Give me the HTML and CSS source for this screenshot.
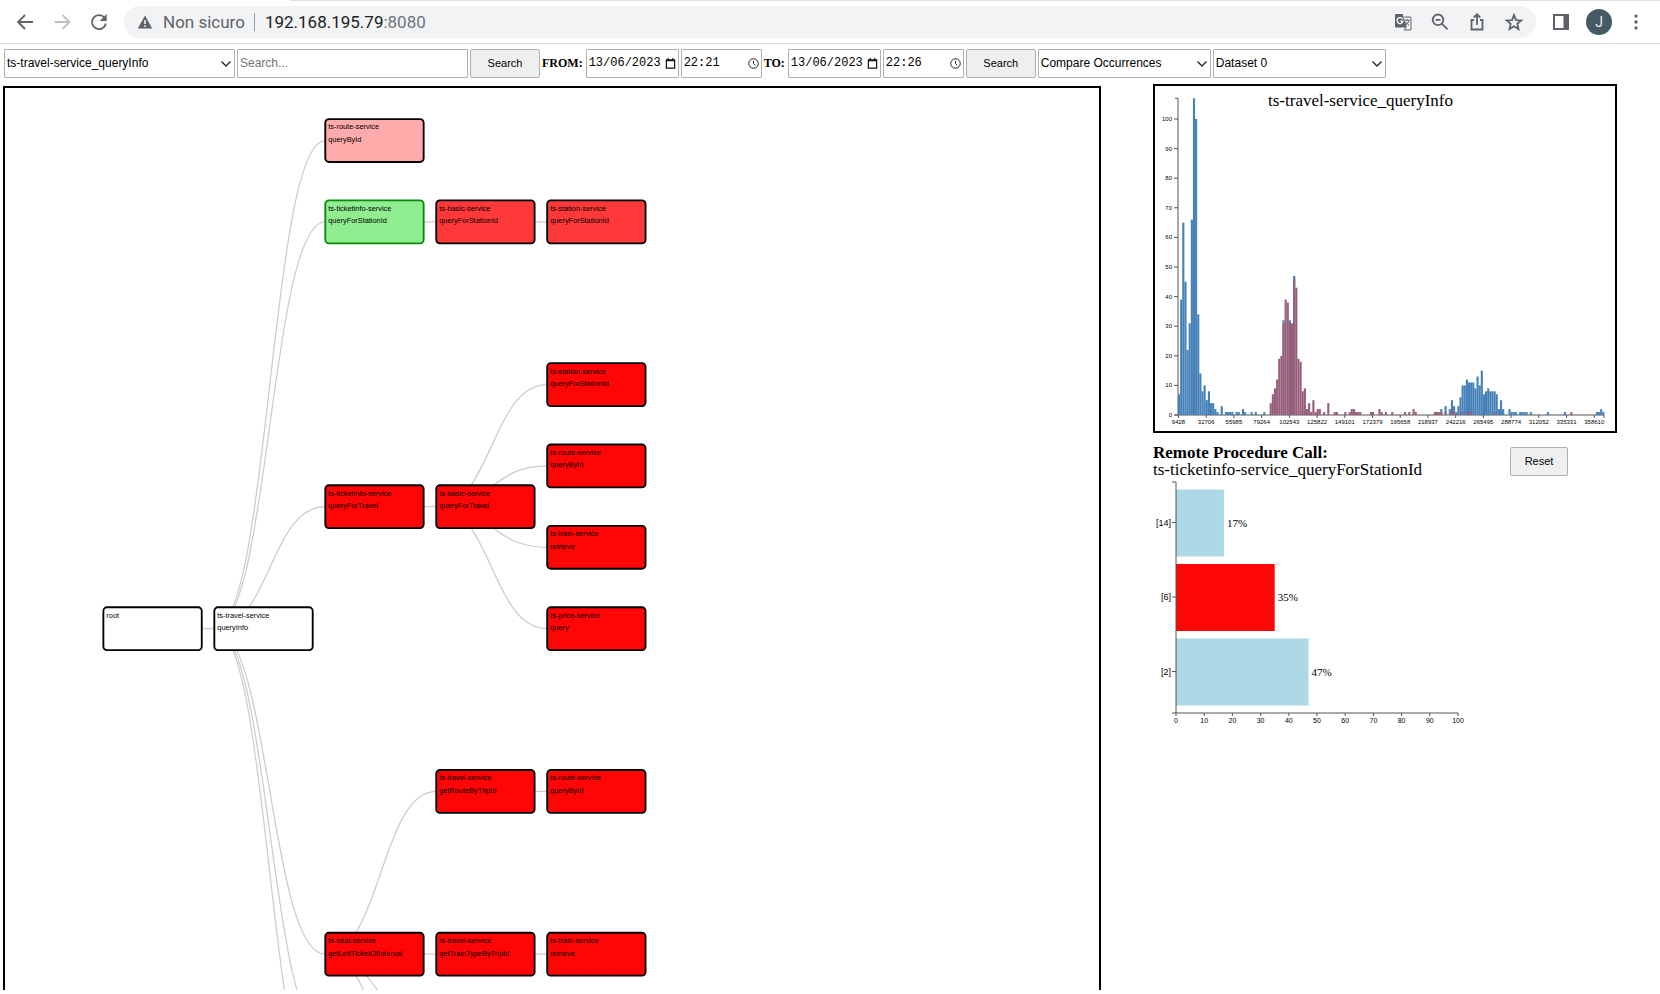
FILE: index.html
```html
<!DOCTYPE html>
<html lang="it">
<head>
<meta charset="utf-8">
<title>192.168.195.79:8080</title>
<link rel="stylesheet" href="styles.css">
</head>
<body>
<header class="browser-bar">
  <button class="icon-btn" aria-label="Back"><svg viewBox="0 0 24 24"><path class="line" d="M20 12H5.500M12 5l-7 7 7 7"/></svg></button>
  <button class="icon-btn faded" aria-label="Forward"><svg viewBox="0 0 24 24"><path class="line" d="M4.500 12h14.500M12.500 5l7 7-7 7"/></svg></button>
  <button class="icon-btn" aria-label="Reload"><svg viewBox="0 0 24 24"><path class="line" d="M17.600 7.800A7 7 0 1 0 18.900 13.500"/><path class="solid" d="M19.700 4v7h-7z"/></svg></button>
  <div class="omnibox">
    <svg class="warn" viewBox="0 0 16 16"><path class="solid" fill-rule="evenodd" d="M8 1.500 15.200 14.500H.8zM7.200 6v4h1.600V6zM7.200 11.200v1.700h1.600v-1.700z"/></svg>
    <span class="insecure">Non sicuro</span>
    <span class="divider"></span>
    <span class="url">192.168.195.79<span class="port">:8080</span></span>
    <div class="omni-actions">
      <button class="icon-btn" aria-label="Translate"><svg viewBox="0 0 24 24"><path class="solid" d="M5 4h6.500l1.200 3.300 3.300 10.200H5a1 1 0 0 1-1-1V5a1 1 0 0 1 1-1z"/><path d="M11.800 9.300A3 3 0 1 0 12 11.200H9.300" fill="none" stroke="#fff" stroke-width="1.300"/><path d="M13.500 7H19a1 1 0 0 1 1 1v11a1 1 0 0 1-1 1h-6l2-2.500" fill="none" stroke="#5f6368" stroke-width="1"/><path d="M13.800 10.300h5M16.300 9v1.300M18 10.300c-.5 2.200-2 3.700-3.200 4.700M14.700 11.800c.8 1.500 2 2.600 3.500 3.500" fill="none" stroke="#5f6368" stroke-width="1"/></svg></button>
      <button class="icon-btn" aria-label="Zoom"><svg viewBox="0 0 24 24"><circle class="line" cx="10" cy="9.800" r="5.300"/><path class="line" d="M13.800 13.600 19.500 19.300M7.500 9.800h5"/></svg></button>
      <button class="icon-btn" aria-label="Share"><svg viewBox="0 0 24 24"><path class="line" d="M9 10H6.500v9.500h11V10H15M12 15V4.500M8.800 7.500 12 4.300l3.200 3.200"/></svg></button>
      <button class="icon-btn" aria-label="Bookmark"><svg viewBox="0 0 24 24"><path class="line" d="M12 5.200l2 4.900 5.300.4-4 3.400 1.200 5.200-4.500-2.800-4.500 2.800 1.200-5.200-4-3.400 5.300-.4z"/></svg></button>
    </div>
  </div>
  <button class="icon-btn" aria-label="Side panel"><svg viewBox="0 0 24 24"><path class="solid" fill-rule="evenodd" d="M4 4h16v16H4zM6 6v12h8.500V6z"/></svg></button>
  <button class="avatar" aria-label="Profile">J</button>
  <button class="icon-btn dots" aria-label="Menu"><svg viewBox="0 0 24 24"><circle class="solid" cx="12" cy="5.500" r="1.800"/><circle class="solid" cx="12" cy="12" r="1.800"/><circle class="solid" cx="12" cy="18.500" r="1.800"/></svg></button>
</header>

<form class="controls">
  <select class="field wide" aria-label="Operation"><option>ts-travel-service_queryInfo</option></select>
  <input class="field wide" type="text" placeholder="Search..." aria-label="Search operations">
  <button class="push" type="button">Search</button>
  <label class="range-label" for="from-date">FROM:</label>
  <div class="picker date">
    <input id="from-date" class="field mono" type="text" value="13/06/2023">
    <svg class="picker-icon" viewBox="0 0 12 12"><path d="M1.500 2h9v9h-9zM1 3h10M3.500 0v2M8.500 0v2" fill="none" stroke="#111" stroke-width="1.300"/></svg>
  </div>
  <div class="picker time">
    <input class="field mono" type="text" value="22:21" aria-label="From time">
    <svg class="picker-icon" viewBox="0 0 12 12"><circle cx="6" cy="6" r="5.200" fill="none" stroke="#111"/><path d="M6 3v3l2 2" fill="none" stroke="#111"/></svg>
  </div>
  <label class="range-label" for="to-date">TO:</label>
  <div class="picker date">
    <input id="to-date" class="field mono" type="text" value="13/06/2023">
    <svg class="picker-icon" viewBox="0 0 12 12"><path d="M1.500 2h9v9h-9zM1 3h10M3.500 0v2M8.500 0v2" fill="none" stroke="#111" stroke-width="1.300"/></svg>
  </div>
  <div class="picker time">
    <input class="field mono" type="text" value="22:26" aria-label="To time">
    <svg class="picker-icon" viewBox="0 0 12 12"><circle cx="6" cy="6" r="5.200" fill="none" stroke="#111"/><path d="M6 3v3l2 2" fill="none" stroke="#111"/></svg>
  </div>
  <button class="push" type="button">Search</button>
  <select class="field medium" aria-label="Mode"><option>Compare Occurrences</option></select>
  <select class="field medium" aria-label="Dataset"><option>Dataset 0</option></select>
</form>

<main class="workspace">
  <section class="tree-panel" aria-label="Call tree">
    <svg id="tree" class="tree" viewBox="0 0 1479 1220" preserveAspectRatio="xMinYMin meet"></svg>
  </section>
  <aside class="side">
    <section class="hist-panel">
      <svg id="histogram" class="chart" viewBox="0 0 460 345"></svg>
    </section>
    <div class="rpc-head">
      <div class="rpc-title">
        <strong>Remote Procedure Call:</strong>
        <span>ts-ticketinfo-service_queryForStationId</span>
      </div>
      <button class="push reset" type="button">Reset</button>
    </div>
    <svg id="shares" class="chart" viewBox="0 0 464 260"></svg>
  </aside>
</main>
<script src="app.js"></script>
</body>
</html>
```
FILE: styles.css
```css
* { box-sizing: border-box; }

body {
  margin: 0;
  height: 100vh;
  padding-bottom: 4px;
  display: flex;
  flex-direction: column;
  overflow: hidden;
  background: #fff;
  color: #000;
  font-family: "Liberation Serif", "Times New Roman", serif;
}

button { padding: 0; margin: 0; }

/* Browser bar */
.browser-bar {
  display: flex;
  align-items: center;
  gap: 13px;
  height: 44px;
  flex: none;
  padding: 0 13px;
  border-bottom: 1px solid #dadce0;
  background: linear-gradient(#dee1e6, #dee1e6) 290px 0 / 100% 1px no-repeat;
  font-family: Roboto, sans-serif;
}
.icon-btn {
  width: 24px;
  height: 24px;
  flex: none;
  border: 0;
  background: none;
  color: #5f6368;
}
.icon-btn svg { display: block; width: 100%; height: 24px; }
.icon-btn.faded { color: #bdc1c6; }
.icon-btn.dots { width: 22px; }
.line { fill: none; stroke: currentColor; stroke-width: 1.8; }
.solid { fill: currentColor; }
.omnibox {
  flex: 1;
  display: flex;
  align-items: center;
  height: 32px;
  padding: 0 10px 0 13px;
  border-radius: 16px;
  background: #f1f3f4;
  color: #5f6368;
  font-size: 17px;
}
.warn { width: 16px; height: 16px; margin-right: 10px; }
.divider { width: 1px; height: 18px; margin: 0 10px 0 9px; background: #9aa0a6; }
.url { color: #202124; }
.port { color: #70757a; }
.omni-actions { display: flex; gap: 13px; margin-left: auto; }
.avatar {
  width: 26px;
  height: 26px;
  border: 0;
  border-radius: 50%;
  background: #455a64;
  color: #eceff1;
  font: 14px Roboto, sans-serif;
}

/* Query controls */
.controls {
  display: flex;
  align-items: center;
  gap: 2px;
  flex: none;
  padding: 5px 4px 6px;
}
.field, .push {
  height: 29px;
  font-family: "Liberation Sans", Arial, sans-serif;
  font-size: 12px;
  color: #000;
}
.field {
  width: 100%;
  margin: 0;
  padding: 0 2px 2px;
  border: 1px solid #b0b0b0;
  border-radius: 1px;
  background: #fff;
}
.field::placeholder { color: #757575; }
select.field {
  appearance: none;
  background: #fff url("data:image/svg+xml,%3Csvg xmlns='http://www.w3.org/2000/svg' width='10' height='6'%3E%3Cpath d='M.5.5 5 5 9.500.5' fill='none' stroke='%23222' stroke-width='1.300'/%3E%3C/svg%3E") right 3px center no-repeat;
}
.field.wide { width: 231px; }
.field.medium { width: 173px; }
.push {
  width: 70px;
  padding-bottom: 1px;
  border: 1px solid #b0b0b0;
  border-radius: 2px;
  background: #efefef;
  font-size: 11px;
}
.range-label { padding: 0 1px 1px 0; font-size: 12px; font-weight: bold; }
.picker { position: relative; }
.picker.date { width: 93px; }
.picker.time { width: 81px; }
.picker .field { display: block; }
.field.mono { font-family: "Liberation Mono", monospace; }
.picker-icon {
  position: absolute;
  top: 9px;
  right: 3px;
  width: 11px;
  height: 11px;
  background: #fff;
}

/* Workspace */
.workspace {
  flex: 1;
  min-height: 0;
  display: grid;
  grid-template-columns: 1098fr 464fr;
  gap: 52px;
  padding: 0 43px 0 3px;
}
.tree-panel {
  min-height: 0;
  margin-top: 2px;
  border: 2px solid #000;
  border-bottom: 0;
  overflow: hidden;
}
.tree, .chart { display: block; width: 100%; }
.hist-panel { border: 2px solid #000; }
.link { fill: none; stroke: #ccc; stroke-width: 1.7; }
.node { fill: #fff; stroke: #000; stroke-width: 2.5; }
.node.high { fill: #ff0505; }
.node.mid { fill: #ff3939; }
.node.low { fill: #ffabab; }
.node.picked { fill: #90ee90; stroke: #0a8a0a; }
.node-text { font: 10px "Liberation Sans", Arial, sans-serif; }

.rpc-head {
  display: flex;
  justify-content: space-between;
  align-items: flex-start;
  padding: 11px 49px 0 0;
}
.rpc-title { display: flex; flex-direction: column; font-size: 17px; line-height: 17px; }
.reset { width: 58px; margin-top: 3px; }

.axis { fill: none; stroke: #555; stroke-width: 1; }
.tick-text { font: 6px "Liberation Sans", Arial, sans-serif; }
.tick-text.mid { font-size: 7px; }
.tick-text.big { font-size: 9px; }
.middle { text-anchor: middle; }
.end { text-anchor: end; }
.title-text { font: 17px "Liberation Serif", "Times New Roman", serif; }
.share-text { font: 11px "Liberation Serif", "Times New Roman", serif; }
.bar-all { fill: #4682b8; }
.bar-picked { fill: #985f7a; }
.share { fill: #add8e6; }
.share.hot { fill: #ff0505; }
```
FILE: app.js
```js
const NS = "http://www.w3.org/2000/svg";

function add(parent, tag, attrs, text) {
  const el = document.createElementNS(NS, tag);
  for (const key in attrs) el.setAttribute(key, attrs[key]);
  if (text !== undefined) el.textContent = text;
  parent.appendChild(el);
  return el;
}

/* Call tree: each node is [column, row, service, operation, class, parent] */
const nodes = [
  [0, 0, "root", "", "", null],
  [1, 0, "ts-travel-service", "queryInfo", "", 0],
  [2, -6, "ts-route-service", "queryById", "low", 1],
  [2, -5, "ts-ticketinfo-service", "queryForStationId", "picked", 1],
  [3, -5, "ts-basic-service", "queryForStationId", "mid", 3],
  [4, -5, "ts-station-service", "queryForStationId", "mid", 4],
  [2, -1.5, "ts-ticketinfo-service", "queryForTravel", "high", 1],
  [3, -1.5, "ts-basic-service", "queryForTravel", "high", 6],
  [4, -3, "ts-station-service", "queryForStationId", "high", 7],
  [4, -2, "ts-route-service", "queryById", "high", 7],
  [4, -1, "ts-train-service", "retrieve", "high", 7],
  [4, 0, "ts-price-service", "query", "high", 7],
  [2, 4, "ts-seat-service", "getLeftTicketOfInterval", "high", 1],
  [3, 2, "ts-travel-service", "getRouteByTripId", "high", 12],
  [4, 2, "ts-route-service", "queryById", "high", 13],
  [3, 4, "ts-travel-service", "getTrainTypeByTripId", "high", 12],
  [4, 4, "ts-train-service", "retrieve", "high", 15]
];
/* Links whose far end lies below the visible area: [parent, column, row] */
const hiddenLinks = [[1, 2, 5], [1, 2, 6], [12, 3, 5], [12, 3, 6]];

const nodeX = col => 133 + col * 150;
const nodeY = row => 731 + row * 110;

function drawTree(svg) {
  const link = (parent, col, row) => {
    const x0 = nodeX(nodes[parent][0]), y0 = nodeY(nodes[parent][1]);
    const x1 = nodeX(col), y1 = nodeY(row), m = (x0 + x1) / 2;
    add(svg, "path", { class: "link", d: `M${x0} ${y0}C${m} ${y0} ${m} ${y1} ${x1} ${y1}` });
  };
  nodes.forEach(n => { if (n[5] !== null) link(n[5], n[0], n[1]); });
  hiddenLinks.forEach(l => link(...l));
  nodes.forEach(([col, row, service, operation, cls]) => {
    const x = nodeX(col), y = nodeY(row);
    add(svg, "rect", { class: `node ${cls}`, x, y: y - 29, width: 133, height: 58, rx: 5 });
    add(svg, "text", { class: "node-text", x: x + 4, y: y - 15 }, service);
    if (operation) add(svg, "text", { class: "node-text", x: x + 4, y: y + 2 }, operation);
  });
}

/* Histogram: runs of [first bin, counts...] over 200 bins */
const allRuns = [
  [0, 7, 39, 65, 45, 22, 31, 66, 107, 100, 34, 14, 8, 10, 5, 8, 4, 4, 2, 1],
  [20, 3], [22, 1, 1, 1, 1], [27, 1, 1], [30, 2, 1], [34, 1], [36, 1], [40, 1],
  [49, 32], [52, 32], [54, 47], [123, 2], [125, 3],
  [127, 2, 5, 3, 1, 3, 6, 10, 10, 12, 11, 11, 11, 9, 13, 10, 15, 7, 8, 9, 8, 8, 8, 7, 2, 5, 2],
  [155, 2, 1, 1, 1], [160, 1, 1, 1, 1], [165, 1], [173, 1], [181, 1], [196, 1, 1, 2, 1]
];
const pickedRuns = [
  [43, 4, 7, 9, 12, 19, 20, 31, 39, 38, 31, 31, 46, 43, 19, 18, 8, 9, 2, 4, 1, 5, 1, 2, 2],
  [68, 1], [70, 4], [73, 1, 1], [78, 1], [80, 1, 2, 2, 1, 1, 1], [90, 1, 1], [94, 2, 1],
  [97, 1], [100, 1], [106, 1], [108, 1], [110, 2, 1], [120, 1, 1, 1, 1], [125, 1],
  [128, 2, 1], [133, 1], [136, 1, 1], [148, 1], [184, 1]
];
const binLabels = [9428, 32706, 55985, 79264, 102543, 125822, 149101, 172379,
  195658, 218937, 242216, 265495, 288774, 312052, 335331, 358610];

function drawHistogram(svg) {
  const left = 23, base = 329, bin = 2.132, unit = 2.96;
  const draw = (runs, cls) => runs.forEach(([start, ...counts]) => counts.forEach((c, i) =>
    add(svg, "rect", { class: cls, x: left + (start + i) * bin, y: base - c * unit, width: bin, height: c * unit })));
  add(svg, "path", { class: "axis", d: `M20 ${base - 107 * unit}h3V${base}h-3M${left} ${base}h426v3` });
  draw(allRuns, "bar-all");
  draw(pickedRuns, "bar-picked");
  for (let v = 0; v <= 100; v += 10) {
    const y = base - v * unit;
    add(svg, "path", { class: "axis", d: `M19 ${y}h4` });
    add(svg, "text", { class: "tick-text end", x: 17, y: y + 2 }, v);
  }
  binLabels.forEach((label, i) => {
    const x = left + 0.5 + i * 13 * bin;
    add(svg, "path", { class: "axis", d: `M${x} ${base}v3` });
    add(svg, "text", { class: "tick-text middle", x, y: base + 9 }, label);
  });
  add(svg, "text", { class: "title-text", x: 113, y: 20 }, "ts-travel-service_queryInfo");
}

const shares = [["[14]", 17, ""], ["[6]", 35, "hot"], ["[2]", 47, ""]];

function drawShares(svg) {
  const left = 23, top = 4, bottom = 235, unit = 2.82, step = 74.5;
  shares.forEach(([label, value, cls], i) => {
    const y = 11.5 + i * step, mid = y + 33;
    add(svg, "rect", { class: `share ${cls}`, x: left, y, width: value * unit, height: 67 });
    add(svg, "path", { class: "axis", d: `M19 ${mid}h4` });
    add(svg, "text", { class: "tick-text big end", x: 18, y: mid + 3 }, label);
    add(svg, "text", { class: "share-text", x: left + value * unit + 3, y: mid + 4 }, value + "%");
  });
  add(svg, "path", { class: "axis", d: `M19 ${top}h4V${bottom}h-4M${left} ${bottom}h${100 * unit}` });
  for (let v = 0; v <= 100; v += 10) {
    const x = left + v * unit;
    add(svg, "path", { class: "axis", d: `M${x} ${bottom}v3` });
    add(svg, "text", { class: "tick-text mid middle", x, y: bottom + 10 }, v);
  }
}

drawTree(document.getElementById("tree"));
drawHistogram(document.getElementById("histogram"));
drawShares(document.getElementById("shares"));
```
